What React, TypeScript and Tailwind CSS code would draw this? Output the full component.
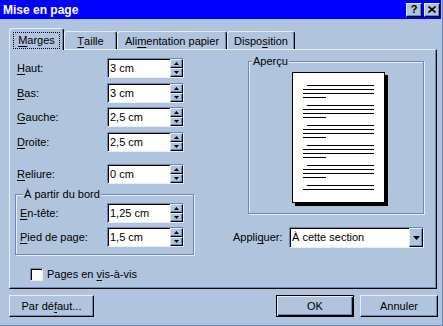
import React from 'react';

// classic 3D frames, lightsteelblue scheme
const raised =
  'border border-t-[#e6edf6] border-l-[#e6edf6] border-r-black border-b-black shadow-[inset_-1px_-1px_0_#6d87b8]';
const sunken =
  'border border-t-[#6d87b8] border-l-[#6d87b8] border-r-[#e6edf6] border-b-[#e6edf6] shadow-[inset_1px_1px_0_#000]';
const etched =
  'border border-[#6d87b8] shadow-[inset_1px_1px_0_#e6edf6,1px_1px_0_#e6edf6]';

const U: React.FC<{ children: React.ReactNode }> = ({ children }) => (
  <span className="underline underline-offset-[2px] decoration-1">{children}</span>
);

const Arrow: React.FC<{ up?: boolean }> = ({ up }) => (
  <svg width="5" height="3" viewBox="0 0 5 3">
    <path d={up ? 'M2.5 0 L5 3 L0 3 Z' : 'M0 0 L5 0 L2.5 3 Z'} fill="#000" />
  </svg>
);

const Spin: React.FC<{ value: string }> = ({ value }) => (
  <div className={`flex h-[20px] w-[77px] bg-white ${sunken}`}>
    <div className="flex flex-1 items-center pl-[2px]">{value}</div>
    <div className="flex w-[13px] flex-col">
      <div className={`flex flex-1 items-center justify-center bg-[#b0c4de] ${raised}`}>
        <Arrow up />
      </div>
      <div className={`flex flex-1 items-center justify-center bg-[#b0c4de] ${raised}`}>
        <Arrow />
      </div>
    </div>
  </div>
);

const Row: React.FC<{ label: React.ReactNode; value: string; labelW: string; className?: string }> = ({
  label,
  value,
  labelW,
  className = '',
}) => (
  <div className={`flex h-[20px] items-center ${className}`}>
    <span className={labelW}>{label}</span>
    <Spin value={value} />
  </div>
);

// one block of text lines on the preview sheet
const Para: React.FC<{ short?: boolean }> = ({ short = true }) => (
  <div className="flex flex-col gap-[3px]">
    <div className="ml-[4px] h-[1px] w-[67px] bg-black" />
    <div className="h-[1px] w-[71px] bg-black" />
    {short && (
      <>
        <div className="h-[1px] w-[71px] bg-black" />
        <div className="h-[1px] w-[23px] bg-black" />
      </>
    )}
  </div>
);

const Tab: React.FC<{ w: string; children: React.ReactNode }> = ({ w, children }) => (
  <div
    className={`flex h-[18px] items-center justify-center rounded-t-[3px] border border-b-0 border-t-[#e6edf6] border-l-[#e6edf6] border-r-black pt-[2px] shadow-[inset_-1px_0_0_#6d87b8] ${w}`}
  >
    {children}
  </div>
);

export default function App() {
  return (
    <div className="flex h-[326px] w-[443px] flex-col bg-[#b0c4de] font-['Liberation_Sans',Arial,sans-serif] text-[11px] leading-[13px] text-black shadow-[inset_-1px_-1px_0_#6d87b8]">
      {/* title bar */}
      <div className="mr-[2px] flex h-[19px] items-center justify-between bg-[#0000ff] pl-[3px] pr-[1px]">
        <span className="pt-[1px] text-[12px] font-bold text-white">Mise en page</span>
        <div className="flex gap-[2px]">
          <div className={`flex h-[14px] w-[16px] items-center justify-center bg-[#b0c4de] text-[11px] font-bold ${raised}`}>
            ?
          </div>
          <div className={`flex h-[14px] w-[16px] items-center justify-center bg-[#b0c4de] ${raised}`}>
            <svg width="8" height="7" viewBox="0 0 8 7">
              <path d="M0.5 0.5 L7.5 6.5 M7.5 0.5 L0.5 6.5" stroke="#000" strokeWidth="1.6" />
            </svg>
          </div>
        </div>
      </div>

      <div className="ml-[9px] mt-[9px] w-[428px]">
        {/* tabs */}
        <div className="flex h-[21px] items-end">
          <div className="relative z-10 -mb-px flex h-[22px] w-[55px] items-start justify-center rounded-t-[3px] border border-b-0 border-t-[#e6edf6] border-l-[#e6edf6] border-r-black bg-[#b0c4de] pt-[3px] shadow-[inset_-1px_0_0_#6d87b8]">
            <span className="border border-dotted border-black px-[4px] pb-[1px] pt-[1px]">
              <U>M</U>arges
            </span>
          </div>
          <Tab w="w-[53px]">
            <U>T</U>aille
          </Tab>
          <Tab w="w-[110px]">
            Ali<U>m</U>entation papier
          </Tab>
          <Tab w="w-[68px]">
            Dispo<U>s</U>ition
          </Tab>
        </div>

        {/* panel */}
        <div className="flex h-[240px] border border-t-[#e6edf6] border-l-[#e6edf6] border-r-black border-b-black shadow-[inset_-1px_-1px_0_#6d87b8]">
          <div className="flex w-[200px] flex-col pl-[7px] pt-[8px]">
            <Row label={<><U>H</U>aut:</>} value="3 cm" labelW="w-[90px]" />
            <Row label={<><U>B</U>as:</>} value="3 cm" labelW="w-[90px]" className="mt-[5px]" />
            <Row label={<><U>G</U>auche:</>} value="2,5 cm" labelW="w-[90px]" className="mt-[4px]" />
            <Row label={<><U>D</U>roite:</>} value="2,5 cm" labelW="w-[90px]" className="mt-[5px]" />
            <Row label={<><U>R</U>eliure:</>} value="0 cm" labelW="w-[90px]" className="mt-[12px]" />

            <fieldset className={`-ml-[2px] mt-[4px] w-[179px] pb-[7px] pl-[4px] ${etched}`}>
              <legend className="ml-[3px] bg-[#b0c4de] px-[1px] leading-[13px]">À partir du bord</legend>
              <Row label={<><U>E</U>n-tête:</>} value="1,25 cm" labelW="w-[87px]" className="mt-[2px]" />
              <Row label={<><U>P</U>ied de page:</>} value="1,5 cm" labelW="w-[87px]" className="mt-[4px]" />
            </fieldset>

            <div className="ml-[13px] mt-[13px] flex items-center gap-[4px]">
              <div className={`h-[13px] w-[13px] bg-white ${sunken}`} />
              <span>
                Pages en <U>v</U>is-à-vis
              </span>
            </div>
          </div>

          <div className="flex flex-1 flex-col items-end pr-[12px]">
            <fieldset className={`mt-[5px] h-[159px] w-[176px] ${etched}`}>
              <legend className="ml-[3px] bg-[#b0c4de] px-[1px] leading-[13px]">Aperçu</legend>
              <div className="ml-[43px] mt-[4px] flex h-[131px] w-[93px] flex-col gap-[7px] border border-black bg-white pl-[10px] pt-[12px] shadow-[3px_3px_0_#000]">
                <Para />
                <Para />
                <Para />
                <Para />
                <Para />
                <Para short={false} />
              </div>
            </fieldset>

            <div className="mt-[13px] flex w-[191px] items-center">
              <span>
                Appli<U>q</U>uer:
              </span>
              <div className={`ml-auto flex h-[21px] w-[135px] bg-white ${sunken}`}>
                <div className="flex flex-1 items-center pl-[2px]">À cette section</div>
                <div className={`flex w-[14px] items-center justify-center bg-[#b0c4de] ${raised}`}>
                  <svg width="7" height="4" viewBox="0 0 7 4">
                    <path d="M0 0 L7 0 L3.5 4 Z" fill="#000" />
                  </svg>
                </div>
              </div>
            </div>
          </div>
        </div>

        {/* buttons */}
        <div className="mt-[6px] flex">
          <button className={`h-[22px] w-[85px] bg-[#b0c4de] ${raised}`}>
            Par dé<U>f</U>aut...
          </button>
          <button className="ml-auto h-[22px] w-[78px] border border-black bg-[#b0c4de] shadow-[inset_1px_1px_0_#e6edf6,inset_-1px_-1px_0_#000,inset_-2px_-2px_0_#6d87b8]">
            OK
          </button>
          <button className={`-mr-[1px] ml-[6px] h-[22px] w-[78px] bg-[#b0c4de] ${raised}`}>Annuler</button>
        </div>
      </div>
    </div>
  );
}
